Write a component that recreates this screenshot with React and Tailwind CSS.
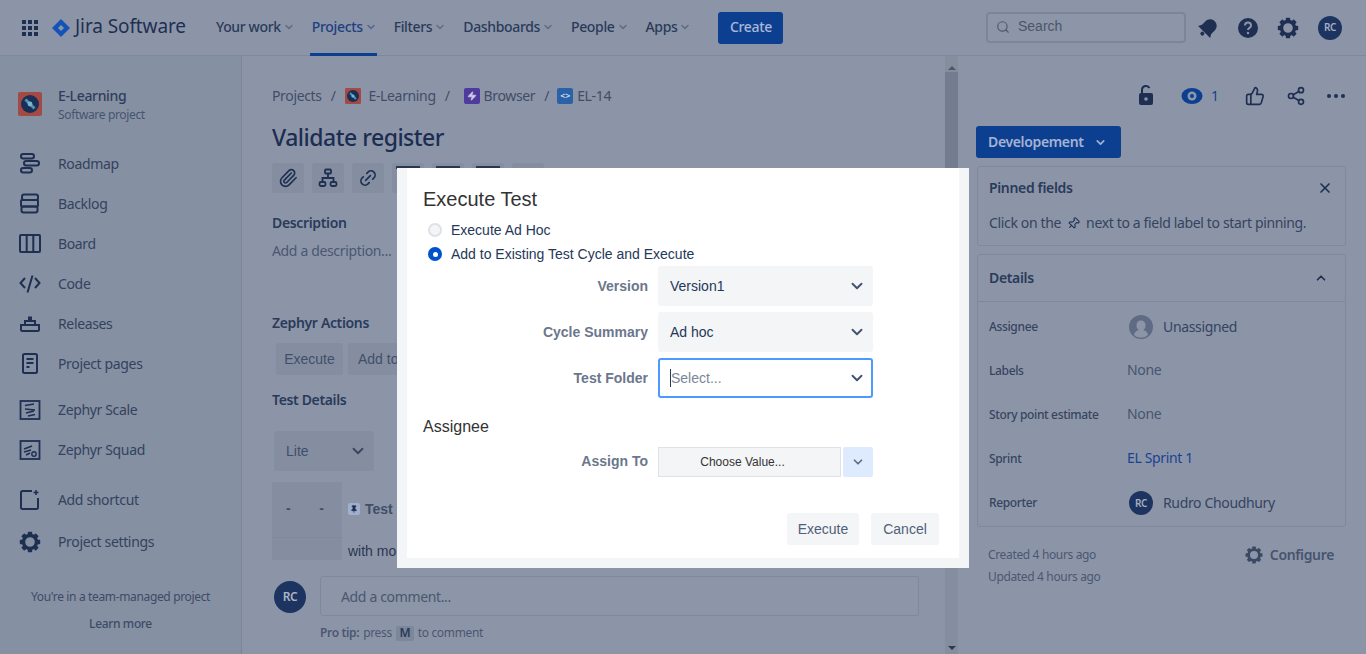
import { ChevronDown, ChevronUp, X, Search, ThumbsUp, Share2, Paperclip, Link2, Pin, Zap } from 'lucide-react'

const ink = '#1f2f52'

function Gear({ size = 24, color = ink }) {
  return (
    <svg width={size} height={size} viewBox="0 0 24 24" fill="none">
      <circle cx="12" cy="12" r="6.500" stroke={color} strokeWidth="3.400" />
      {[0, 45, 90, 135, 180, 225, 270, 315].map((a) => (
        <rect key={a} x="9.800" y="1.800" width="4.400" height="4" rx="0.800" fill={color} transform={`rotate(${a} 12 12)`} />
      ))}
    </svg>
  )
}

function ProjectLogo({ size = 24 }) {
  return (
    <svg width={size} height={size} viewBox="0 0 24 24">
      <rect width="24" height="24" rx="2" fill="#a34a45" />
      <circle cx="12" cy="12" r="9" fill="#1a2f55" />
      <path d="M7.500 7.500l9 9" stroke="#4d93b8" strokeWidth="3" />
      <circle cx="12" cy="12" r="2.400" fill="#7db4cf" />
    </svg>
  )
}

const navIcons = {
  roadmap: (
    <g fill="none" stroke={ink} strokeWidth="2">
      <rect x="3" y="2" width="13" height="4.500" rx="2.200" />
      <rect x="6" y="9" width="15" height="4.500" rx="2.200" />
      <rect x="3" y="16" width="11" height="4.500" rx="2.200" />
    </g>
  ),
  backlog: (
    <g fill="none" stroke={ink} strokeWidth="2">
      <rect x="4" y="2.500" width="16" height="5.500" rx="2" />
      <rect x="3" y="8" width="17" height="6.500" rx="1" />
      <rect x="3.500" y="14.500" width="16" height="6" rx="2" />
    </g>
  ),
  board: (
    <g fill="none" stroke={ink} strokeWidth="2">
      <rect x="2" y="3" width="20" height="17" rx="1" />
      <path d="M8.700 3v17M15.300 3v17" />
    </g>
  ),
  code: (
    <g fill="none" stroke={ink} strokeWidth="2">
      <path d="M7 6l-4.500 5 4.500 5M17 6l4.500 5-4.500 5M14.500 3.500l-5 17" />
    </g>
  ),
  releases: (
    <g fill="none" stroke={ink} strokeWidth="2">
      <path d="M3 13h18v4.500a1.500 1.500 0 01-1.500 1.500h-15A1.500 1.500 0 013 17.500z" />
      <path d="M7 13V9h10v4M11 9V5.500h2V9" />
    </g>
  ),
  pages: (
    <g fill="none" stroke={ink} strokeWidth="2">
      <rect x="5" y="2" width="14" height="19" rx="1.500" />
      <path d="M8.500 7h7M8.500 11h7M8.500 15h3" />
    </g>
  ),
  scale: (
    <g fill="none" stroke={ink}>
      <rect x="2.500" y="3" width="19" height="18" strokeWidth="1.800" />
      <path d="M7 7.500l9-1.500M7 11l10 1M8 15l8-2M10 18l7-1.500" strokeWidth="1.700" />
    </g>
  ),
  squad: (
    <g fill="none" stroke={ink}>
      <rect x="2.500" y="3" width="19" height="18" strokeWidth="1.800" />
      <path d="M6 11l8-3M6 14l7-2M8 17l4-2" strokeWidth="1.700" />
      <circle cx="16" cy="16" r="2.200" strokeWidth="1.400" />
    </g>
  ),
  shortcut: (
    <g fill="none" stroke={ink} strokeWidth="2">
      <path d="M14 3H4.500A1.500 1.500 0 003 4.500v15A1.500 1.500 0 004.500 21h14a1.500 1.500 0 001.500-1.500V10" />
      <path d="M18 2v5M15.500 4.500h5" strokeWidth="1.600" />
    </g>
  ),
}

const navTop = [
  ['roadmap', 'Roadmap'],
  ['backlog', 'Backlog'],
  ['board', 'Board'],
  ['code', 'Code'],
  ['releases', 'Releases'],
  ['pages', 'Project pages'],
]

function NavItem({ icon, label, children }) {
  return (
    <div className="h-10 flex items-center pl-[18px]">
      <span className="w-6 h-6 flex items-center justify-center mr-4 flex-shrink-0">
        {children || <svg width="24" height="24" viewBox="0 0 24 24">{navIcons[icon]}</svg>}
      </span>
      <span className="text-sm text-[#34425f]">{label}</span>
    </div>
  )
}

function TopNav({ label, active }) {
  return (
    <div className={`relative h-14 flex items-center mr-[17px] pb-[2px] text-sm font-medium ${active ? 'text-[#1e3f82]' : 'text-[#2a3a5a]'}`}>
      {label}
      <ChevronDown size={12} strokeWidth={3} className={`ml-0.5 ${active ? 'text-[#52668f]' : 'text-[#606c84]'}`} />
      {active && <span className="absolute -left-[2px] right-0 bottom-0 h-[3px] bg-[#0d3f91]" />}
    </div>
  )
}

function Header() {
  return (
    <header className="h-14 flex-shrink-0 flex items-center bg-[#8c95a7] border-b border-[#7f899b] pl-[22px] pr-[24px]">
      <div className="grid grid-cols-3 gap-[2px] w-4 mr-[14px]">
        {[...Array(9)].map((_, i) => <span key={i} className="w-1 h-1 bg-[#1f2f52]" />)}
      </div>
      <svg width="18" height="18" viewBox="0 0 18 18" className="mr-[5px]">
        <path d="M9 0l9 9-9 9-9-9z" fill="#1552b8" />
        <path d="M9 6l3 3-3 3-3-3z" fill="#8c95a7" />
      </svg>
      <span className="text-[19px] text-[#1f2f52] whitespace-nowrap tracking-[-0.1px] pb-[2px] mr-[29px] w-[112px]">Jira Software</span>
      <TopNav label="Your work" />
      <TopNav label="Projects" active />
      <TopNav label="Filters" />
      <TopNav label="Dashboards" />
      <TopNav label="People" />
      <TopNav label="Apps" />
      <div className="ml-[10px] h-8 w-[65px] flex items-center justify-center pb-[1px] rounded-[3px] bg-[#0d3f91] text-sm font-medium text-[#aab8d6]">Create</div>
      <div className="ml-auto mb-[1px] w-[200px] h-[31px] flex items-center rounded-[4px] border-2 border-[#7c869a] bg-[#8d96a9] pl-2 text-[#51596c]">
        <Search size={14} strokeWidth={2} className="mr-2" />
        <span className="text-sm font-['Liberation_Sans'] tracking-normal pb-[2px] text-[#4c5568]">Search</span>
      </div>
      <div className="flex items-center ml-[10px]">
        <svg width="24" height="24" viewBox="0 0 24 24" className="mr-[16px]">
          <g transform="rotate(45 12 12)">
            <path d="M12 2.500c-3.800 0-6.500 2.800-6.500 6.500v5L3.500 17.500h17L18.500 14V9c0-3.700-2.700-6.500-6.500-6.500z" fill={ink} />
            <circle cx="12" cy="20" r="2" fill={ink} />
          </g>
        </svg>
        <svg width="24" height="24" viewBox="0 0 24 24" className="mr-[16px]">
          <circle cx="12" cy="12" r="10" fill={ink} />
          <path d="M9 9.500c0-4 6-4 6 0 0 2.500-3 2.200-3 4.500" fill="none" stroke="#8c95a7" strokeWidth="2" />
          <circle cx="12" cy="17" r="1.200" fill="#8c95a7" />
        </svg>
        <span className="mr-[18px]"><Gear /></span>
        <span className="w-6 h-6 rounded-full bg-[#1d3461] flex items-center justify-center text-[10px] font-semibold text-[#a5afc2]">RC</span>
      </div>
    </header>
  )
}

function Sidebar() {
  return (
    <aside className="w-[242px] flex-shrink-0 bg-[#8590a2] border-r border-[#7b8598] flex flex-col">
      <div className="h-[52px] mt-[22px] pl-[18px] flex items-center">
        <ProjectLogo />
        <div className="ml-4 pt-[1px]">
          <div className="text-sm font-medium leading-[19px] text-[#2e3d5c]">E-Learning</div>
          <div className="text-xs leading-[19px] text-[#475470]">Software project</div>
        </div>
      </div>
      <div className="mt-[14px]">
        {navTop.map(([icon, label]) => <NavItem key={icon} icon={icon} label={label} />)}
      </div>
      <div className="mt-[6px]">
        <NavItem icon="scale" label="Zephyr Scale" />
        <NavItem icon="squad" label="Zephyr Squad" />
      </div>
      <div className="mt-[10px]">
        <NavItem icon="shortcut" label="Add shortcut" />
      </div>
      <div className="mt-[2px]">
        <NavItem label="Project settings"><Gear /></NavItem>
      </div>
      <div className="mt-[22px] text-center text-xs text-[#3e4b67] leading-[26px]">
        <div>You're in a team-managed project</div>
        <div className="font-medium mt-[1px]">Learn more</div>
      </div>
    </aside>
  )
}

function ToolButton({ children }) {
  return <span className="w-8 h-[30px] rounded-[3px] bg-[#848ea0] flex items-center justify-center">{children}</span>
}

function HiddenTool({ dark }) {
  return (
    <span className="w-8 h-[30px] rounded-[3px] bg-[#848ea0] flex justify-center pt-[3px]">
      {dark && <span className="w-6 h-[3px] bg-[#2a3650]" />}
    </span>
  )
}

function Main() {
  return (
    <main className="w-[703px] flex-shrink-0 bg-[#8c95a7] flex flex-col overflow-hidden">
      <div className="h-[504px] flex-shrink-0 overflow-hidden pl-[30px] pt-[30px]">
        <div className="flex items-center text-sm text-[#404d69] h-5">
          <span>Projects</span>
          <span className="ml-[9px] mr-[9px]">/</span>
          <ProjectLogo size={16} />
          <span className="ml-2">E-Learning</span>
          <span className="ml-[9px] mr-[14px]">/</span>
          <span className="w-4 h-4 rounded-[2px] bg-[#4f3a9e] flex items-center justify-center mr-1">
            <Zap size={10} color="#c9cfe0" fill="#c9cfe0" />
          </span>
          <span>Browser</span>
          <span className="ml-[9px] mr-[8px]">/</span>
          <span className="w-4 h-4 rounded-[2px] bg-[#2a62a8] flex items-center justify-center text-[9px] font-bold text-[#c9d6ea] mr-1">&lt;&gt;</span>
          <span>EL-14</span>
        </div>
        <h1 className="mt-[15px] text-[23px] tracking-[-0.5px] font-medium leading-8 text-[#1c2d52]">Validate register</h1>
        <div className="mt-[10px] flex gap-2">
          <ToolButton><Paperclip size={20} color={ink} /></ToolButton>
          <ToolButton>
            <svg width="20" height="20" viewBox="0 0 20 20" fill="none" stroke={ink} strokeWidth="1.800">
              <rect x="7" y="1.500" width="6" height="4" rx="1" />
              <rect x="1.500" y="14" width="6" height="4" rx="1.500" />
              <rect x="12.500" y="14" width="6" height="4" rx="1.500" />
              <path d="M10 5.500V10M4.500 14v-4h11v4" />
            </svg>
          </ToolButton>
          <ToolButton><Link2 size={20} color={ink} className="-rotate-45" /></ToolButton>
          <HiddenTool dark />
          <HiddenTool dark />
          <HiddenTool dark />
          <HiddenTool />
        </div>
        <div className="mt-[20px] text-sm font-semibold leading-5 text-[#2a3a5a]">Description</div>
        <div className="mt-2 text-sm leading-5 text-[#4b5772]">Add a description...</div>
        <div className="mt-[52px] text-sm font-semibold leading-5 text-[#2a3a5a]">Zephyr Actions</div>
        <div className="mt-[10px] ml-1 flex gap-[5px] font-['Liberation_Sans'] tracking-normal text-sm text-[#414e6a]">
          <span className="h-8 w-[67px] flex items-center justify-center rounded-[3px] bg-[#848ea0]">Execute</span>
          <span className="h-8 w-[120px] pl-[10px] flex items-center rounded-[3px] bg-[#848ea0]">Add to</span>
        </div>
        <div className="mt-[15px] text-sm font-semibold leading-5 text-[#2a3a5a]">Test Details</div>
        <div className="mt-[21px] ml-[2px] w-[100px] h-10 flex items-center justify-between pl-3 pr-[7px] rounded-[3px] bg-[#848ea0] font-['Liberation_Sans'] tracking-normal text-sm text-[#414e6a]">
          Lite
          <ChevronDown size={18} strokeWidth={2.500} color="#3a4660" />
        </div>
        <div className="mt-[11px] flex font-['Liberation_Sans'] tracking-normal text-sm">
          <div className="w-[70px] flex-shrink-0 bg-[#848ea0] h-[78px]">
            <div className="h-[56px] flex items-center justify-between pl-[14px] pr-[18px] pb-[3px] font-bold text-[#414e6a] border-b border-[#7f899b]">
              <span>-</span><span>-</span>
            </div>
          </div>
          <div className="ml-[6px]">
            <div className="h-[55px] flex items-center font-bold text-[#414e6a] pb-[2px]">
              <span className="w-3 h-3 rounded-[2px] bg-[#a0b0cc] mr-[5px] flex-shrink-0 flex items-center justify-center">
                <Pin size={8} color={ink} fill={ink} />
              </span>
              Test
            </div>
            <div className="leading-[18px] text-[#2a3650] mt-[5px]">with mo</div>
          </div>
        </div>
      </div>
      <div className="pl-8 flex-shrink-0 pt-4">
        <div className="flex items-start">
          <span className="mt-[5px] w-8 h-8 rounded-full bg-[#1d3461] flex items-center justify-center text-xs font-semibold text-[#a9b3c6]">RC</span>
          <div className="ml-[14px] w-[599px] h-10 border border-[#7f899b] rounded-[3px] bg-[#8d96a9] flex items-center pl-5 pt-[1px] text-sm text-[#49566f]">Add a comment...</div>
        </div>
        <div className="mt-[9px] ml-[46px] flex items-center text-xs text-[#4b5772]">
          <span className="font-semibold">Pro tip:</span>
          <span className="ml-1">press</span>
          <span className="mx-1 h-[15px] w-[18px] rounded-[2px] bg-[#7d879a] flex items-center justify-center font-semibold text-[#2a3a5a]">M</span>
          <span>to comment</span>
        </div>
      </div>
    </main>
  )
}

function Scrollbar() {
  return (
    <div className="w-[13px] flex-shrink-0 bg-[#858e9f] flex flex-col items-center relative">
      <span className="mt-[10px] w-0 h-0 border-x-[4px] border-x-transparent border-b-[4px] border-b-[#4d5669]" />
      <span className="mt-[2px] w-full h-[420px] bg-[#737d8f]" />
      <span className="mt-auto mb-[4px] w-0 h-0 border-x-[4px] border-x-transparent border-t-[4px] border-t-[#2f384a]" />
    </div>
  )
}

function DetailRow({ label, children }) {
  return (
    <div className="h-11 flex items-center">
      <span className="w-[138px] flex-shrink-0 text-xs font-medium text-[#364460]">{label}</span>
      {children}
    </div>
  )
}

function Details() {
  return (
    <aside className="flex-1 bg-[#8c95a7] pl-[19px] pr-[20px] min-w-0">
      <div className="h-[70px] flex items-center justify-end pt-[10px]">
        <svg width="20" height="24" viewBox="0 0 20 24" className="mr-[25px]">
          <path d="M6 9V6a4 4 0 017.500-2" fill="none" stroke={ink} strokeWidth="2" />
          <rect x="3" y="9" width="14" height="12" rx="2" fill={ink} />
          <circle cx="10" cy="15" r="1.800" fill="#8c95a7" />
        </svg>
        <svg width="22" height="24" viewBox="0 0 22 24" className="mr-[8px]">
          <ellipse cx="11" cy="12" rx="10.500" ry="8" fill="#0d3f91" />
          <circle cx="11" cy="12" r="4.500" fill="#8c95a7" />
          <circle cx="11" cy="12" r="2" fill="#0d3f91" />
        </svg>
        <span className="text-sm text-[#173f8a] mr-[26px] w-[8px]">1</span>
        <ThumbsUp size={20} color={ink} className="mr-[21px]" />
        <Share2 size={20} color={ink} className="mr-[21px]" />
        <span className="flex gap-[3px] mr-[1px]">
          <span className="w-[4px] h-[4px] rounded-full bg-[#1f2f52]" />
          <span className="w-[4px] h-[4px] rounded-full bg-[#1f2f52]" />
          <span className="w-[4px] h-[4px] rounded-full bg-[#1f2f52]" />
        </span>
      </div>
      <div className="-ml-[1px] h-8 w-[145px] rounded-[3px] bg-[#0d3f91] flex items-center pl-3 text-sm font-semibold text-[#a4b3d2]">
        Developement
        <ChevronDown size={13} strokeWidth={3} className="ml-[10px]" />
      </div>
      <div className="mt-2 h-20 border border-[#7f899b] rounded-[3px] px-[11px]">
        <div className="h-[42px] flex items-center justify-between text-sm font-semibold text-[#2a3a5a]">
          Pinned fields
          <X size={16} strokeWidth={2.500} color={ink} className="mr-[1px]" />
        </div>
        <div className="mt-1 flex items-center text-sm text-[#35435f]">
          Click on the
          <Pin size={13} color={ink} className="mx-[6px] rotate-45" />
          next to a field label to start pinning.
        </div>
      </div>
      <div className="mt-2 h-[273px] border border-[#7f899b] rounded-[3px]">
        <div className="h-[47px] flex items-center justify-between px-[11px] border-b border-[#7f899b] text-sm font-semibold text-[#2a3a5a]">
          Details
          <ChevronUp size={14} strokeWidth={3} color={ink} className="mr-[6px]" />
        </div>
        <div className="px-[11px] pt-[3px] text-sm text-[#35435f]">
          <DetailRow label="Assignee">
            <svg width="24" height="24" viewBox="0 0 24 24" className="ml-[2px] mr-[10px]">
              <circle cx="12" cy="12" r="12" fill="#5f6b84" />
              <path d="M7.500 10a4.500 4.500 0 019 0v1a4.500 4.500 0 01-9 0z" fill="#8c95a7" />
              <path d="M5 20c1-4 3-5 7-5s6 1 7 5a10 10 0 01-14 0z" fill="#8c95a7" />
            </svg>
            Unassigned
          </DetailRow>
          <DetailRow label="Labels"><span className="pb-[2px] text-[#47546f]">None</span></DetailRow>
          <DetailRow label="Story point estimate"><span className="pb-[2px] text-[#47546f]">None</span></DetailRow>
          <DetailRow label="Sprint"><span className="pb-[2px] text-[#1b4292]">EL Sprint 1</span></DetailRow>
          <DetailRow label="Reporter">
            <span className="w-6 h-6 ml-[2px] mr-[10px] rounded-full bg-[#1d3461] flex items-center justify-center text-[10px] font-semibold text-[#a5afc2]">RC</span>
            Rudro Choudhury
          </DetailRow>
        </div>
      </div>
      <div className="mt-[17px] flex justify-between">
        <div className="pl-[11px] text-xs leading-[22px] text-[#4b5772]">
          <div>Created 4 hours ago</div>
          <div>Updated 4 hours ago</div>
        </div>
        <div className="h-[22px] flex items-center text-sm font-semibold text-[#47546f] mr-[12px]">
          <span className="mr-[6px]"><Gear size={20} color="#3b4964" /></span>
          Configure
        </div>
      </div>
    </aside>
  )
}

function ModalSelect({ label, value, focused, placeholder }) {
  return (
    <div className="flex items-center h-10">
      <span className="w-[225px] text-right text-sm font-bold text-[#6b778c]">{label}</span>
      <div className={`ml-[10px] w-[215px] h-10 flex items-center justify-between rounded-[3px] ${focused ? 'bg-white border-2 border-[#4c9aff] pl-[10px] pr-[5px]' : 'bg-[#f4f5f7] pl-3 pr-[7px]'}`}>
        {placeholder
          ? <span className="border-l border-[#253858] text-[#7a869a] leading-[18px]">{placeholder}</span>
          : <span className="text-[#253858]">{value}</span>}
        <ChevronDown size={18} strokeWidth={2.500} color="#42526e" />
      </div>
    </div>
  )
}

function Radio({ checked, label }) {
  return (
    <div className="h-6 flex items-center">
      {checked
        ? <span className="ml-[5px] w-[14px] h-[14px] rounded-full bg-[#0052cc] flex items-center justify-center"><span className="w-[5px] h-[5px] rounded-full bg-white" /></span>
        : <span className="ml-[5px] w-[14px] h-[14px] rounded-full bg-[#f4f5f7] border-2 border-[#dfe1e6]" />}
      <span className="ml-[9px] text-[#253858]">{label}</span>
    </div>
  )
}

function Modal() {
  return (
    <div className="absolute left-[397px] top-[168px] w-[572px] h-[400px] bg-white border-x-10 border-b-10 border-[#f4f5f7] px-4 pt-[19px] font-['Liberation_Sans'] tracking-normal text-sm">
      <h2 className="text-xl leading-6 text-[#333333]">Execute Test</h2>
      <div className="mt-[7px]">
        <div className="mt-[3px]"><Radio label="Execute Ad Hoc" /></div>
        <Radio checked label="Add to Existing Test Cycle and Execute" />
      </div>
      <div className="flex flex-col gap-[6px]">
        <ModalSelect label="Version" value="Version1" />
        <ModalSelect label="Cycle Summary" value="Ad hoc" />
        <ModalSelect label="Test Folder" placeholder="Select..." focused />
      </div>
      <div className="mt-[19px] text-base leading-5 text-[#333333]">Assignee</div>
      <div className="mt-[10px] flex items-center">
        <span className="w-[225px] text-right font-bold pb-[3px] text-[#6b778c]">Assign To</span>
        <div className="ml-[10px] w-[183px] h-[30px] flex items-center justify-center pr-[14px] bg-[#f4f5f7] border border-[#dfe1e6] text-xs text-[#333333]">Choose Value...</div>
        <div className="ml-[2px] w-[30px] h-[30px] flex items-center justify-center rounded-[2px] bg-[#deebff]">
          <ChevronDown size={14} strokeWidth={3} color="#5e6c84" />
        </div>
      </div>
      <div className="mt-9 flex justify-end gap-3 pr-[4px] text-[#505f79]">
        <span className="w-[72px] h-8 flex items-center justify-center rounded-[3px] bg-[#f4f5f7]">Execute</span>
        <span className="w-[68px] h-8 flex items-center justify-center rounded-[3px] bg-[#f4f5f7]">Cancel</span>
      </div>
    </div>
  )
}

export default function App() {
  return (
    <div className="relative w-[1366px] h-[654px] overflow-hidden flex flex-col bg-[#8c95a7] tracking-[-0.35px] font-['Noto_Sans',sans-serif]">
      <Header />
      <div className="flex flex-1 min-h-0">
        <Sidebar />
        <Main />
        <Scrollbar />
        <Details />
      </div>
      <Modal />
    </div>
  )
}
